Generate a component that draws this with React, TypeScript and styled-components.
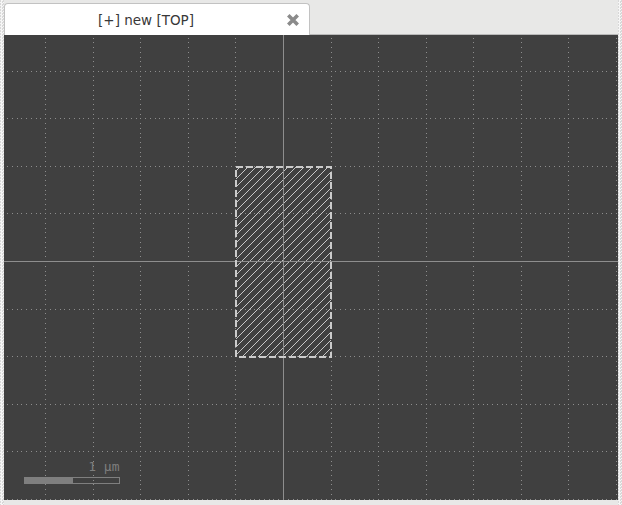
import React from "react";
import styled, { createGlobalStyle } from "styled-components";

// canvas geometry (svg coords, origin = top-left of the canvas)
const W = 614;
const H = 465;
const OX = 279;
const OY = 226;
const GRID = 47.55;
const STEP = GRID / 10;

const GlobalStyle = createGlobalStyle`
	html, body {
		margin: 0;
		padding: 0;
		background: #e8e8e7;
		font-family: "DejaVu Sans", "Liberation Sans", sans-serif;
	}
`;

const range = (from: number, to: number) => {
	const out: number[] = [];
	for (let i = from; i <= to; i++) out.push(i);
	return out;
};

const GridDots: React.FC = () => {
	const dots: React.ReactNode[] = [];
	const cols = range(-6, 8)
		.filter((k) => k !== 0)
		.map((k) => Math.round(OX + k * GRID))
		.filter((x) => x >= 0 && x < W);
	const rows = range(-5, 6)
		.filter((k) => k !== 0)
		.map((k) => Math.round(OY + k * GRID))
		.filter((y) => y >= 0 && y < H);

	cols.forEach((x) => {
		for (let j = -60; j <= 60; j++) {
			const y = Math.round(OY + j * STEP);
			if (y < 0 || y >= H) continue;
			dots.push(<rect key={`v${x}_${j}`} x={x} y={y} width={1} height={1} />);
		}
	});
	rows.forEach((y) => {
		for (let j = -70; j <= 80; j++) {
			const x = Math.round(OX + j * STEP);
			if (x < 0 || x >= W) continue;
			dots.push(<rect key={`h${y}_${j}`} x={x} y={y} width={1} height={1} />);
		}
	});

	return <g fill="#8d8d8d">{dots}</g>;
};

const LayoutView: React.FC = () => (
	<svg width={W} height={H} viewBox={`0 0 ${W} ${H}`} style={{ display: "block" }}>
		<defs>
			<pattern id="hatch" patternUnits="userSpaceOnUse" width={8} height={8}>
				<path
					d="M0,8 L8,0 M-2,2 L2,-2 M6,10 L10,6"
					stroke="#c6c6c6"
					strokeWidth={1}
					shapeRendering="crispEdges"
				/>
			</pattern>
		</defs>
		<GridDots />
		<rect x={232} y={132} width={95} height={190} fill="url(#hatch)" />
		<g shapeRendering="crispEdges" fill="#8e8e8e">
			<rect x={OX} y={0} width={1} height={H} />
			<rect x={0} y={OY} width={W} height={1} />
		</g>
		<rect
			x={232}
			y={132}
			width={95}
			height={190}
			fill="none"
			stroke="#cbcbcb"
			strokeWidth={2}
			strokeDasharray="7 3"
		/>
		{/* scale bar */}
		<text
			x={115.5}
			y={436}
			textAnchor="end"
			fill="#7e7e7e"
			fontFamily="'DejaVu Sans Mono', 'Liberation Mono', monospace"
			fontSize={13}
		>
			1 µm
		</text>
		<rect x={20} y={442} width={49} height={7} fill="#7f7f7f" />
		<rect x={20.5} y={442.5} width={95} height={6} fill="none" stroke="#7f7f7f" strokeWidth={1} />
	</svg>
);

const CloseIcon: React.FC = () => (
	<svg width={12} height={12} viewBox="0 0 12 12">
		<path d="M1.3,1.3 L10.7,10.7 M10.7,1.3 L1.3,10.7" stroke="#8b8b8b" strokeWidth={3.6} />
	</svg>
);

const App: React.FC = () => (
	<>
		<GlobalStyle />
		<Frame>
			<Window>
				<TabBar>
					<Tab>
						<TabLabel>[+] new [TOP]</TabLabel>
						<CloseButton>
							<CloseIcon />
						</CloseButton>
					</Tab>
				</TabBar>
				<Canvas>
					<LayoutView />
				</Canvas>
			</Window>
		</Frame>
	</>
);

// ================== styles ========================
const Frame = styled.div`
	width: 622px;
	height: 505px;
	background: repeating-conic-gradient(#f6f6f6 0 25%, #d8d8d8 0 50%) 0 0 / 3px 3px;
	overflow: hidden;
`;

const Window = styled.div`
	margin: 0 4px;
	height: 100%;
	background: #e8e8e7;
	display: flex;
	flex-direction: column;
`;

const TabBar = styled.div`
	height: 35px;
	box-sizing: border-box;
	border-bottom: 1px solid #b9b9b9;
	display: flex;
	align-items: flex-end;
`;

const Tab = styled.div`
	width: 306px;
	height: 32px;
	box-sizing: border-box;
	margin-bottom: -1px;
	background: #ffffff;
	border: 1px solid #c2c2c2;
	border-bottom: none;
	border-radius: 4px 4px 0 0;
	display: flex;
	align-items: center;
`;

const TabLabel = styled.span`
	flex: 1;
	text-align: center;
	font-size: 13.5px;
	color: #383838;
	padding-top: 1px;
`;

const CloseButton = styled.span`
	width: 12px;
	height: 12px;
	margin-right: 10px;
	display: flex;
`;

const Canvas = styled.div`
	height: ${H}px;
	background: #404040;
	overflow: hidden;
`;

export default App;
